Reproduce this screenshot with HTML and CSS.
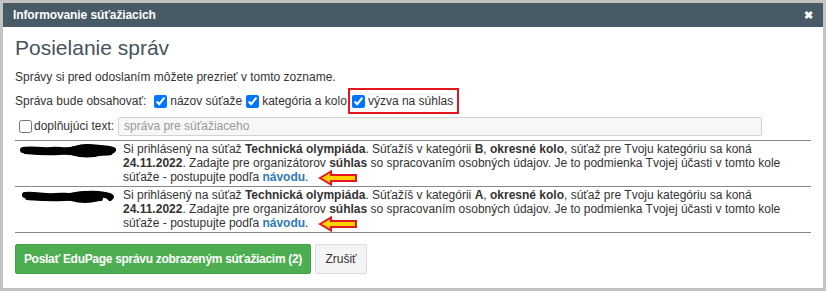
FILE: index.html
```html
<!DOCTYPE html>
<html lang="sk">
<head>
    <meta charset="UTF-8">
    <title>Informovanie súťažiacich</title>
    <link rel="stylesheet" href="styles.css">
</head>
<body>

    <div class="dialog">
        <div class="dialog-header">
            <span class="dialog-title">Informovanie súťažiacich</span>
            <span class="dialog-close">&#10006;</span>
        </div>

        <div class="dialog-body">
            <h2 class="page-title">Posielanie správ</h2>

            <p class="intro">Správy si pred odoslaním môžete prezrieť v tomto zozname.</p>

            <div class="options">
                <span class="options-label">Správa bude obsahovať:</span>
                <label class="opt"><input type="checkbox" checked>názov súťaže</label>
                <label class="opt"><input type="checkbox" checked>kategória a kolo</label>
                <label class="opt opt-marked"><input type="checkbox" checked>výzva na súhlas</label>
            </div>

            <div class="extra">
                <label class="extra-label"><input type="checkbox">doplňujúci text:</label>
                <input class="extra-input" type="text" placeholder="správa pre súťažiaceho">
            </div>

            <div class="messages">
                <div class="msg">
                    <div class="msg-name">
                        <svg width="100" height="14" viewBox="0 0 100 14">
                            <path d="M4 6 C12 4 22 7 32 6 S46 8 56 5 S72 3 82 4 S92 5 94 6" stroke="#000" stroke-width="6" fill="none" stroke-linecap="round"/>
                            <path d="M6 8 C16 9 26 10 40 9 S60 11 76 10 S90 10 92 9" stroke="#000" stroke-width="4" fill="none" stroke-linecap="round"/>
                            <ellipse cx="68" cy="7" rx="20" ry="6.5" fill="#000"/>
                        </svg>
                    </div>
                    <div class="msg-text">
                        Si prihlásený na súťaž <b>Technická olympiáda</b>. Súťažíš v kategórii <b>B</b>, <b>okresné kolo</b>, súťaž pre Tvoju kategóriu sa koná<br>
                        <b>24.11.2022</b>. Zadajte pre organizátorov <b>súhlas</b> so spracovaním osobných údajov. Je to podmienka Tvojej účasti v tomto kole<br>
                        súťaže - postupujte podľa <a href="#" class="link">návodu</a>.
                        <svg class="arrow" width="40" height="16" viewBox="0 0 40 16">
                            <polygon points="2,8 13,1.5 13,5 38,5 38,11 13,11 13,14.5" fill="#ffd200" stroke="#e4161e" stroke-width="2" stroke-linejoin="miter"/>
                        </svg>
                    </div>
                </div>
                <div class="msg">
                    <div class="msg-name">
                        <svg width="100" height="14" viewBox="0 0 100 14">
                            <path d="M6 5 C16 4 26 7 36 6 S50 7 60 5 S76 3 86 5 S90 7 91 8" stroke="#000" stroke-width="6" fill="none" stroke-linecap="round"/>
                            <path d="M8 8 C20 9 30 10 45 9 S65 10 82 9" stroke="#000" stroke-width="4" fill="none" stroke-linecap="round"/>
                            <ellipse cx="66" cy="7" rx="18" ry="6" fill="#000"/>
                        </svg>
                    </div>
                    <div class="msg-text">
                        Si prihlásený na súťaž <b>Technická olympiáda</b>. Súťažíš v kategórii <b>A</b>, <b>okresné kolo</b>, súťaž pre Tvoju kategóriu sa koná<br>
                        <b>24.11.2022</b>. Zadajte pre organizátorov <b>súhlas</b> so spracovaním osobných údajov. Je to podmienka Tvojej účasti v tomto kole<br>
                        súťaže - postupujte podľa <a href="#" class="link">návodu</a>.
                        <svg class="arrow" width="40" height="16" viewBox="0 0 40 16">
                            <polygon points="2,8 13,1.5 13,5 38,5 38,11 13,11 13,14.5" fill="#ffd200" stroke="#e4161e" stroke-width="2" stroke-linejoin="miter"/>
                        </svg>
                    </div>
                </div>
            </div>

            <div class="actions">
                <button class="btn btn-send">Poslať EduPage správu zobrazeným súťažiacim (2)</button>
                <button class="btn btn-cancel">Zrušiť</button>
            </div>
        </div>
    </div>

</body>
</html>
```

FILE: styles.css
```css
body {
    margin: 0;
    padding: 3px;
    background-color: #c3c3c3;
    font-family: "Liberation Sans", Arial, sans-serif;
    font-size: 12px;
    color: #333;
}

.dialog {
    width: 820px;
    height: 285px;
    background-color: #fff;
}

.dialog-header {
    height: 24px;
    background-color: #475a66;
    display: flex;
    align-items: center;
    justify-content: space-between;
    padding: 0 10px;
}

.dialog-title {
    color: #fff;
    font-weight: bold;
    font-size: 12px;
    letter-spacing: -0.1px;
}

.dialog-close {
    color: #fff;
    font-size: 11px;
    font-weight: bold;
    margin-top: 1px;
}

.dialog-body {
    padding: 0 12px;
}

.page-title {
    margin: 7px 0 0;
    font-size: 21px;
    font-weight: normal;
    color: #47525d;
    line-height: 28px;
}

.intro {
    margin: 8px 0 0;
    line-height: 14px;
}

.options {
    display: flex;
    align-items: center;
    height: 26px;
    margin-top: 4px;
}

.options-label {
    margin-right: 4px;
}

.opt {
    display: flex;
    align-items: center;
    height: 22px;
}

.opt input {
    margin: 0 3px 0 4px;
    width: 13px;
    height: 13px;
}

.opt-marked {
    border: 2px solid #e4161e;
    height: 22px;
    padding-right: 4px;
    margin-left: 1px;
}

.opt-marked input {
    margin-left: 2px;
}

.extra {
    display: flex;
    align-items: center;
    margin-top: 1px;
    height: 22px;
}

.extra-label {
    display: flex;
    align-items: center;
    margin-left: 4px;
}

.extra-label input {
    margin: 0 2px 0 0;
    width: 13px;
    height: 13px;
}

.extra-input {
    margin-left: 4px;
    width: 644px;
    height: 19px;
    box-sizing: border-box;
    border: 1px solid #d3d3d3;
    border-radius: 2px;
    background-color: #f7f7f7;
    font-family: inherit;
    font-size: 12px;
    padding: 0 5px;
}

.extra-input::placeholder {
    color: #999;
}

.messages {
    margin-top: 3px;
    border-bottom: 1px solid #888;
}

.msg {
    display: flex;
    border-top: 1px solid #888;
    padding: 1px 0 2px;
}

.msg-name {
    width: 108px;
    padding-top: 2px;
    margin-left: 4px;
}

.msg-text {
    flex: 1;
    line-height: 14px;
    margin-left: -4px;
}

.link {
    color: #2e7ab8;
    font-weight: bold;
    text-decoration: none;
}

.arrow {
    vertical-align: middle;
    margin: -3px 0 -3px 6px;
}

.actions {
    display: flex;
    gap: 4px;
    margin-top: 11px;
}

.btn {
    height: 30px;
    font-family: inherit;
    font-size: 12px;
    border-radius: 2px;
    padding: 0;
    white-space: nowrap;
    cursor: pointer;
}

.btn-send {
    width: 296px;
    background-color: #4cae50;
    border: 1px solid #44a047;
    color: #fff;
    font-weight: bold;
    letter-spacing: -0.3px;
}

.btn-cancel {
    width: 52px;
    background-color: #f4f4f6;
    border: 1px solid #dcdcdc;
    color: #333;
}
```
